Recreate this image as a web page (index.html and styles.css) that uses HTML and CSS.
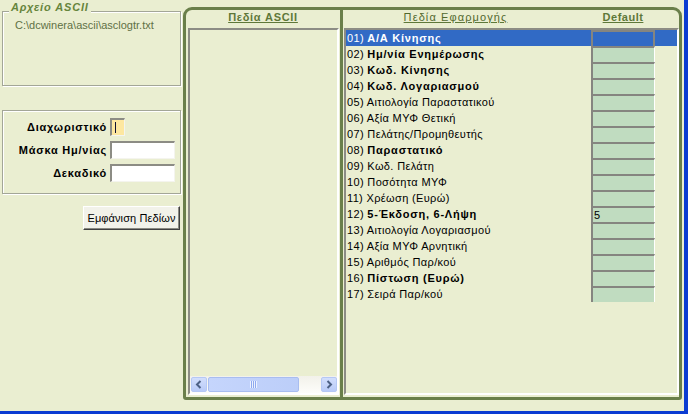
FILE: index.html
```html
<!DOCTYPE html>
<html lang="el">
<head>
<meta charset="utf-8">
<title>Πεδία ASCII</title>
<link rel="stylesheet" href="styles.css">
</head>
<body>
<div class="window">
  <div class="left">
    <div class="grp grp-file">
      <div class="legend">Αρχείο ASCII</div>
      <div class="path">C:\dcwinera\ascii\asclogtr.txt</div>
    </div>
    <div class="grp grp-opts">
      <div class="opt-row"><span class="lbl">Διαχωριστικό</span><span class="inp inp-sep"><span class="caret"></span></span></div>
      <div class="opt-row"><span class="lbl">Μάσκα Ημ/νίας</span><span class="inp inp-wide"></span></div>
      <div class="opt-row"><span class="lbl">Δεκαδικό</span><span class="inp inp-wide"></span></div>
    </div>
    <div class="btn-row"><button class="btn">Εμφάνιση Πεδίων</button></div>
  </div>

  <div class="frame">
    <div class="col col-ascii">
      <div class="hdr hdr-ascii"><span class="hdr-bold">Πεδία ASCII</span></div>
      <div class="listbox list-ascii">
        <div class="list-body"></div>
        <div class="hscroll">
          <div class="sb-btn"><svg width="14" height="13" viewBox="0 0 14 13"><path d="M8.5 3 L5 6.5 L8.5 10" fill="none" stroke="#4d6185" stroke-width="2"/></svg></div>
          <div class="sb-thumb"><span class="grip"></span></div>
          <div class="sb-track"></div>
          <div class="sb-btn"><svg width="14" height="13" viewBox="0 0 14 13"><path d="M5.5 3 L9 6.5 L5.5 10" fill="none" stroke="#4d6185" stroke-width="2"/></svg></div>
        </div>
      </div>
    </div>
    <div class="divider"></div>
    <div class="col col-app">
      <div class="hdr hdr-app">
        <span class="hdr-fields">Πεδία Εφαρμογής</span>
        <span class="hdr-default hdr-bold">Default</span>
      </div>
      <div class="listbox list-app">
        <div class="row sel"><span class="txt">01) <b>Α/Α Κίνησης</b></span><span class="cell"></span></div>
        <div class="row"><span class="txt">02) <b>Ημ/νία Ενημέρωσης</b></span><span class="cell"></span></div>
        <div class="row"><span class="txt">03) <b>Κωδ. Κίνησης</b></span><span class="cell"></span></div>
        <div class="row"><span class="txt">04) <b>Κωδ. Λογαριασμού</b></span><span class="cell"></span></div>
        <div class="row"><span class="txt">05) Αιτιολογία Παραστατικού</span><span class="cell"></span></div>
        <div class="row"><span class="txt">06) Αξία ΜΥΦ Θετική</span><span class="cell"></span></div>
        <div class="row"><span class="txt">07) Πελάτης/Προμηθευτής</span><span class="cell"></span></div>
        <div class="row"><span class="txt">08) <b>Παραστατικό</b></span><span class="cell"></span></div>
        <div class="row"><span class="txt">09) Κωδ. Πελάτη</span><span class="cell"></span></div>
        <div class="row"><span class="txt">10) Ποσότητα ΜΥΦ</span><span class="cell"></span></div>
        <div class="row"><span class="txt">11) Χρέωση (Ευρώ)</span><span class="cell"></span></div>
        <div class="row"><span class="txt">12) <b>5-Έκδοση, 6-Λήψη</b></span><span class="cell">5</span></div>
        <div class="row"><span class="txt">13) Αιτιολογία Λογαριασμού</span><span class="cell"></span></div>
        <div class="row"><span class="txt">14) Αξία ΜΥΦ Αρνητική</span><span class="cell"></span></div>
        <div class="row"><span class="txt">15) Αριθμός Παρ/κού</span><span class="cell"></span></div>
        <div class="row"><span class="txt">16) <b>Πίστωση (Ευρώ)</b></span><span class="cell"></span></div>
        <div class="row"><span class="txt">17) Σειρά Παρ/κού</span><span class="cell"></span></div>
      </div>
    </div>
  </div>
</div>
</body>
</html>
```

FILE: styles.css
```css
* { box-sizing: border-box; }
html, body { margin: 0; padding: 0; }
body {
  width: 688px;
  height: 414px;
  overflow: hidden;
  background: #eaeed1;
  font-family: "Liberation Sans", Arial, sans-serif;
  font-size: 11px;
  color: #000;
}
.window {
  width: 688px;
  height: 414px;
  display: flex;
  align-items: flex-start;
  background: #eaeed1;
  border-right: 4px solid #0b3cd2;
  border-bottom: 3px solid #0b3cd2;
}

/* ---------- left side ---------- */
.left {
  width: 183px;
  flex: none;
  display: flex;
  flex-direction: column;
  padding-left: 2px;
}
.grp {
  width: 179px;
  border: 1px solid #a3a697;
  box-shadow: inset 1px 1px 0 #fff, 1px 1px 0 #fff;
}
.grp-file {
  margin-top: 11px;
  height: 75px;
}
.legend {
  width: fit-content;
  margin: -11px 0 0 6px;
  padding: 0 2px;
  background: #eaeed1;
  font-weight: bold;
  font-style: italic;
  letter-spacing: 0.8px;
  line-height: 13px;
  color: #66853c;
}
.path {
  margin-top: 5px;
  padding-left: 12px;
  line-height: 13px;
  color: #5f7145;
}
.grp-opts {
  margin-top: 24px;
  height: 84px;
  padding-top: 7px;
  display: flex;
  flex-direction: column;
  gap: 5px;
}
.opt-row {
  display: flex;
  align-items: center;
  gap: 3px;
  height: 18px;
}
.lbl {
  width: 104px;
  text-align: right;
  font-weight: bold;
  letter-spacing: 0.75px;
  white-space: nowrap;
}
.inp {
  display: flex;
  align-items: center;
  height: 18px;
  background: #fff;
  border-top: 2px solid #8c8c84;
  border-left: 2px solid #8c8c84;
  border-right: 1px solid #f4f4ee;
  border-bottom: 1px solid #f4f4ee;
}
.inp-sep { width: 15px; background: #fde7a0; }
.inp-wide { width: 65px; }
.caret {
  width: 1px;
  height: 11px;
  margin-left: 3px;
  background: #101030;
}
.btn-row {
  display: flex;
  justify-content: flex-end;
  padding-right: 3px;
  margin-top: 12px;
}
.btn {
  width: 97px;
  height: 24px;
  padding: 0;
  font-family: inherit;
  font-size: 11px;
  letter-spacing: 0.1px;
  color: #000;
  background: #f2f2ea;
  border: 1px solid;
  border-color: #fff #404040 #404040 #fff;
  box-shadow: inset -1px -1px 0 #8a8a82;
}

/* ---------- main frame ---------- */
.frame {
  margin-top: 7px;
  width: 499px;
  height: 393px;
  flex: none;
  border: 3px solid #6a7f4a;
  border-radius: 9px 9px 3px 3px;
  display: flex;
}
.col { display: flex; flex-direction: column; }
.col-ascii { width: 154px; padding-left: 2px; }
.divider { width: 3px; background: #6a7f4a; flex: none; }
.col-app { flex: 1; padding-left: 1px; }

.hdr {
  height: 18px;
  padding-top: 1px;
  line-height: 13px;
  color: #5e7839;
  text-decoration: underline;
  white-space: nowrap;
}
.hdr-bold { font-weight: bold; }
.hdr-ascii { text-align: center; padding-right: 2px; letter-spacing: 0.7px; }
.hdr-app { display: flex; }
.hdr-fields { width: 219px; text-align: center; margin-left: 2px; letter-spacing: 1.1px; color: #52692f; }
.hdr-default { width: 64px; margin-left: 26px; text-align: center; letter-spacing: 0.5px; }

.listbox {
  height: 367px;
  border-top: 2px solid #8c8c84;
  border-left: 2px solid #8c8c84;
  border-right: 2px solid #fff;
  border-bottom: 2px solid #fff;
}
.list-ascii {
  width: 151px;
  display: flex;
  flex-direction: column;
}
.list-body { flex: 1; }
.hscroll {
  height: 17px;
  display: flex;
  gap: 1px;
  padding: 1px 0 1px 1px;
  background: linear-gradient(#f2f1ea, #fdfdfa);
}
.sb-btn {
  width: 16px;
  height: 15px;
  display: flex;
  align-items: center;
  justify-content: center;
  border: 1px solid #b5c8f5;
  border-radius: 2px;
  background: linear-gradient(#d2defc, #b9cbf8);
}
.sb-thumb {
  width: 91px;
  height: 15px;
  display: flex;
  align-items: center;
  justify-content: center;
  border: 1px solid #a8bdf0;
  border-radius: 2px;
  background: linear-gradient(90deg, #c5d5fc, #bccef9);
}
.grip {
  width: 7px;
  height: 7px;
  background: repeating-linear-gradient(90deg, #eef3fe 0 1px, #8eaaf0 1px 2px);
}
.sb-track { flex: 1; }

.list-app { width: 335px; }
.row {
  height: 16px;
  display: flex;
  line-height: 16px;
}
.row .txt {
  width: 245px;
  padding-left: 1px;
  white-space: nowrap;
  letter-spacing: 0.35px;
}
.row b { font-weight: bold; letter-spacing: 0.75px; }
.cell {
  width: 64px;
  height: 16px;
  line-height: 14px;
  padding-left: 1px;
  background: #c0dcc0;
  border-top: 2px solid #858580;
  border-left: 2px solid #858580;
  border-right: 1px solid #fff;
}
.row.sel {
  background: #316ac5;
  color: #fff;
}
.row.sel .cell {
  background: transparent;
  border-right: 2px solid #858580;
}
```
